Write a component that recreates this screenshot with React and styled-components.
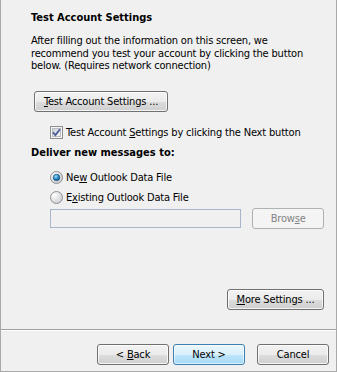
import React from "react"
import styled, { createGlobalStyle, css } from "styled-components"

const Global = createGlobalStyle`
  html, body {
    margin: 0;
    padding: 0;
    background: #f0f0f0;
  }
  body {
    font-family: Tahoma, "DejaVu Sans Condensed", "Liberation Sans", sans-serif;
    font-size: 11px;
    letter-spacing: -0.18px;
    color: #000;
  }
`

const Window = styled.div`
  width: 337px;
  height: 372px;
  box-sizing: border-box;
  background: #f0f0f0;
  border: 1px solid #a9a9a9;
  border-top: none;
  display: flex;
  flex-direction: column;
`

const Content = styled.div`
  flex: 1;
  display: flex;
  flex-direction: column;
  padding: 11px 12px 19px 30px;
`

const Heading = styled.div`
  font-weight: bold;
  letter-spacing: 0;
  line-height: 13px;
  margin-top: ${p => p.mt || 0}px;
`

const Text = styled.p`
  margin: 11px 0 0;
  line-height: 12.5px;
  width: 280px;
`

const Button = styled.button`
  font: inherit;
  letter-spacing: inherit;
  color: #000;
  height: 21px;
  width: ${p => p.w}px;
  padding: 0;
  margin: 0;
  box-sizing: border-box;
  border: 1px solid #707070;
  border-radius: 3px;
  background: linear-gradient(#f2f2f2 0%, #ebebeb 50%, #dddddd 51%, #cfcfcf 100%);
  box-shadow: inset 0 0 0 1px rgba(255, 255, 255, 0.75);
  line-height: 17px;
  text-align: center;

  ${p => p.primary && css`
    border-color: #3c7fb1;
    background: linear-gradient(#eaf6fd 0%, #d9f0fc 50%, #bee6fd 51%, #a7d9f5 100%);
    box-shadow: inset 0 0 0 1px rgba(255, 255, 255, 0.6);
  `}

  ${p => p.disabled && css`
    color: #838383;
    border-color: #adb2b5;
    background: #f4f4f4;
    box-shadow: none;
  `}
`

const Key = styled.span`
  text-decoration: underline;
  text-underline-offset: 1px;
`

const TestRow = styled.div`
  margin: 18px 0 0 3px;
`

const OptionRow = styled.label`
  display: flex;
  align-items: center;
  gap: 3px;
  height: 13px;
  margin: ${p => p.mt || 0}px 0 0 19px;
  line-height: 13px;
  white-space: nowrap;
`

const FileRow = styled.div`
  display: flex;
  align-items: center;
  gap: 11px;
  margin: 4px 0 0 19px;
`

const Field = styled.div`
  width: 192px;
  height: 19px;
  box-sizing: border-box;
  border: 1px solid #a7b6c8;
  background: #f0f0f0;
`

const MoreRow = styled.div`
  margin-top: auto;
  display: flex;
  justify-content: flex-end;
`

const Separator = styled.div`
  height: 1px;
  background: #a0a0a0;
  border-bottom: 1px solid #ffffff;
`

const Footer = styled.div`
  display: flex;
  justify-content: flex-end;
  padding: 13px 7px 0 0;
  flex: 0 0 40px;
  box-sizing: border-box;
`

const Gap = styled.div`
  width: ${p => p.w}px;
`

const CheckBox = () => (
  <svg width="13" height="13" viewBox="0 0 13 13">
    <defs>
      <linearGradient id="cbg" x1="0" y1="0" x2="1" y2="1">
        <stop offset="0" stopColor="#cbcfd5" />
        <stop offset="1" stopColor="#f6f6f6" />
      </linearGradient>
    </defs>
    <rect x="0.5" y="0.5" width="12" height="12" fill="#f4f4f4" stroke="#8f8f8f" />
    <rect x="2.5" y="2.5" width="8" height="8" fill="url(#cbg)" stroke="#b9bcc2" strokeWidth="1" />
    <path d="M3 6.3 L5.4 9 L10 3.2" fill="none" stroke="#4a5f97" strokeWidth="1.8" />
  </svg>
)

const Radio = ({ checked }) => (
  <svg width="13" height="13" viewBox="0 0 13 13">
    <defs>
      <radialGradient id="rbg" cx="0.3" cy="0.3" r="0.8">
        <stop offset="0" stopColor="#ffffff" />
        <stop offset="1" stopColor="#c8ccd2" />
      </radialGradient>
      <radialGradient id="rdot" cx="0.4" cy="0.35" r="0.7">
        <stop offset="0" stopColor="#9fe0fb" />
        <stop offset="0.5" stopColor="#2a8ec8" />
        <stop offset="1" stopColor="#0f4c7c" />
      </radialGradient>
    </defs>
    <circle cx="6.5" cy="6.5" r="6" fill="url(#rbg)" stroke="#8f8f8f" />
    {checked && <circle cx="6.5" cy="6.5" r="3.3" fill="url(#rdot)" stroke="#1c4f78" strokeWidth="0.6" />}
  </svg>
)

export default function App() {
  return (
    <>
      <Global />
      <Window>
        <Content>
          <Heading>Test Account Settings</Heading>
          <Text>
            After filling out the information on this screen, we recommend you test your account by clicking the button below. (Requires network connection)
          </Text>
          <TestRow>
            <Button w={134}><Key>T</Key>est Account Settings ...</Button>
          </TestRow>
          <OptionRow mt={14}>
            <CheckBox />
            <span>Test Account <Key>S</Key>ettings by clicking the Next button</span>
          </OptionRow>
          <Heading mt={7}>Deliver new messages to:</Heading>
          <OptionRow mt={12}>
            <Radio checked />
            <span>Ne<Key>w</Key> Outlook Data File</span>
          </OptionRow>
          <OptionRow mt={7}>
            <Radio />
            <span>E<Key>x</Key>isting Outlook Data File</span>
          </OptionRow>
          <FileRow>
            <Field />
            <Button w={72} disabled>Brow<Key>s</Key>e</Button>
          </FileRow>
          <MoreRow>
            <Button w={97}><Key>M</Key>ore Settings ...</Button>
          </MoreRow>
        </Content>
        <Separator />
        <Footer>
          <Button w={72}>&lt; <Key>B</Key>ack</Button>
          <Gap w={4} />
          <Button w={72} primary>Next &gt;</Button>
          <Gap w={12} />
          <Button w={72}>Cancel</Button>
        </Footer>
      </Window>
    </>
  )
}
